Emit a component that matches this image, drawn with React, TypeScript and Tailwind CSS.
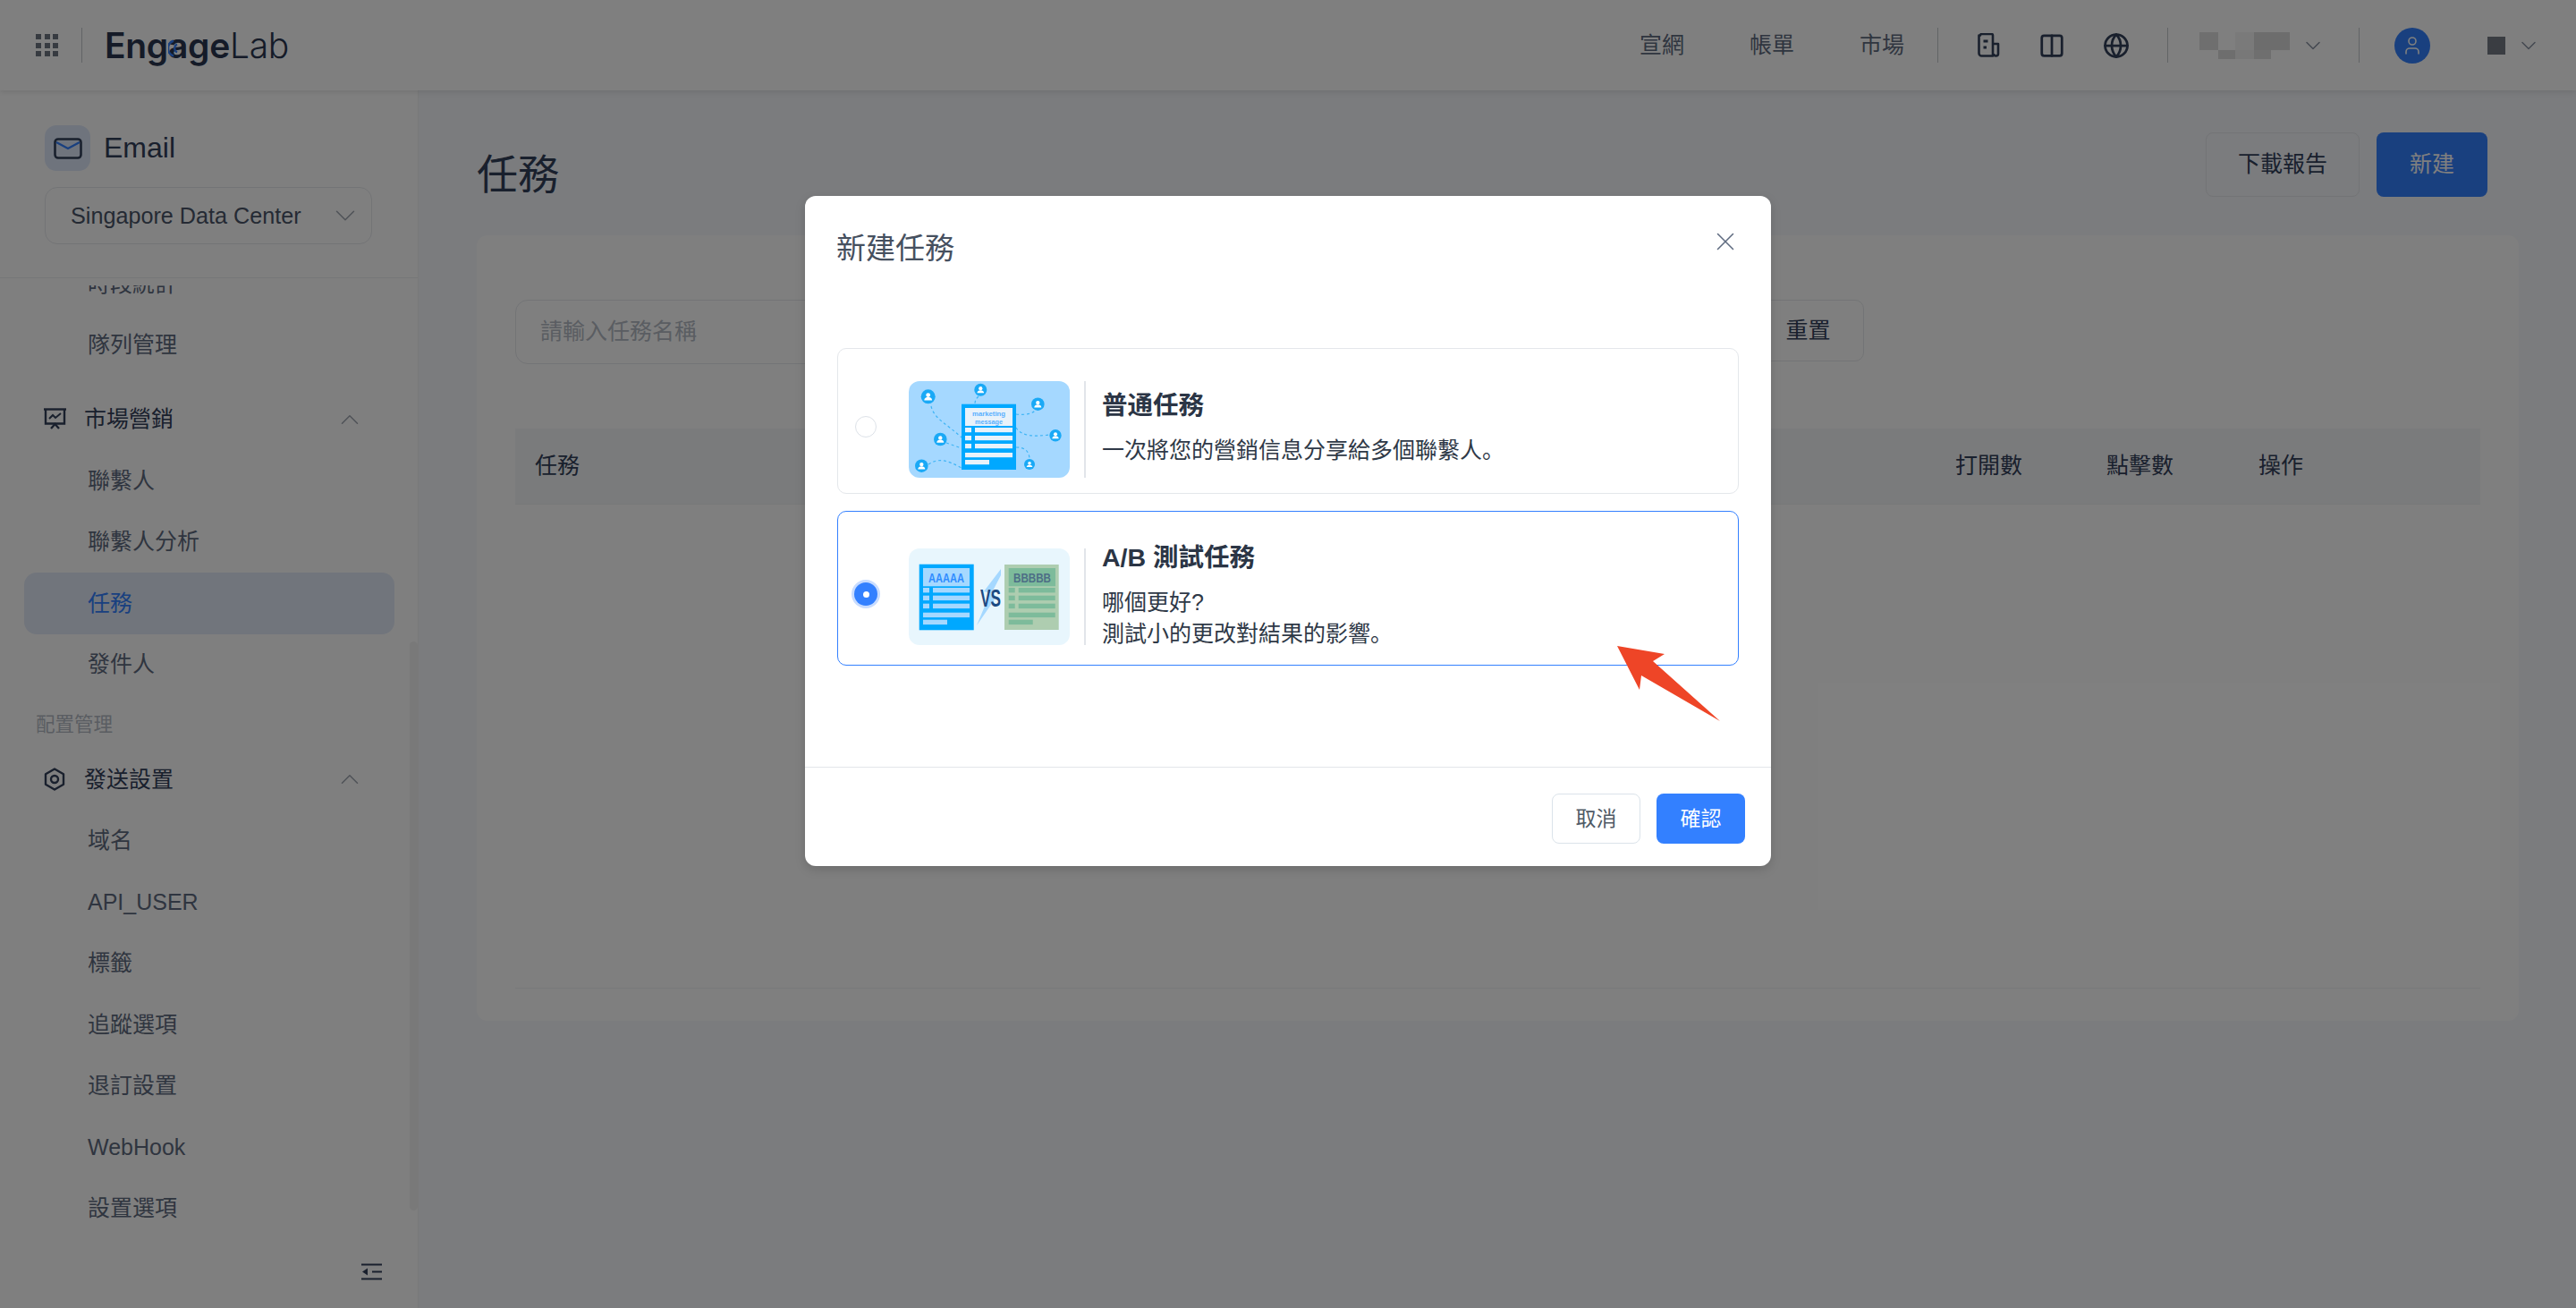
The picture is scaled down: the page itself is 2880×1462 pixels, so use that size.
import { ChevronDown, ChevronUp, Columns2, Globe, User, X } from 'lucide-react';

const subRow = 'flex h-[68.5px] items-center pl-[98px] text-[25px] text-[#5f6b80]';
const groupRow = 'flex h-[68.5px] items-center pl-[49px] pr-[59px] text-[25px] text-[#33405a]';

const GridIcon = () => (
  <div className="grid h-[25px] w-[25px] grid-cols-3 gap-[3.5px]">
    {Array.from({ length: 9 }).map((_, i) => (
      <span key={i} className="bg-[#6f7782]" />
    ))}
  </div>
);

const Logo = () => (
  <div className="flex items-baseline text-[39px] leading-none tracking-[-0.3px] text-[#2a3650] [font-family:Inter,sans-serif]">
    <span className="font-semibold">Eng</span>
    <span className="relative font-semibold">
      a
      <svg className="absolute left-0 top-[13px]" width="12" height="20" viewBox="0 0 12 20" fill="none">
        <path d="M6 1.5A9 9 0 0 0 6 18.5" stroke="#3380ff" strokeWidth="2.6" />
        <path d="M10 5.5A5 5 0 0 0 10 14.5" stroke="#3380ff" strokeWidth="2.2" />
      </svg>
    </span>
    <span className="font-semibold">ge</span>
    <span className="font-light">Lab</span>
  </div>
);

const DocIcon = () => (
  <svg width="25" height="27" viewBox="0 0 25 27" fill="none" stroke="#33405a" strokeWidth="2.6" strokeLinejoin="round">
    <path d="M3 2.5a1.5 1.5 0 0 1 1.5-1.5h11a1.5 1.5 0 0 1 1.5 1.5V25.5H4.5A3 3 0 0 1 1.5 22.5V2.5z" />
    <path d="M17 12h6v11a2.5 2.5 0 0 1-5 0" />
    <path d="M6.5 9h5M6.5 16h3.5" strokeWidth="3" />
  </svg>
);

const Mosaic = () => (
  <div className="w-[101px]">
    <div className="flex h-[20px]">
      <span className="w-[21px] bg-[#dfdfdf]" />
      <span className="w-[19px] bg-white" />
      <span className="w-[21px] bg-[#f4f4f4]" />
      <span className="w-[40px] bg-[#dadada]" />
    </div>
    <div className="ml-[21px] flex h-[10px]">
      <span className="w-[19px] bg-[#dcdcdc]" />
      <span className="w-[21px] bg-[#f0f0f0]" />
      <span className="w-[19px] bg-[#dedede]" />
    </div>
  </div>
);

const MarketIcon = () => (
  <svg width="25" height="25" viewBox="0 0 25 25" fill="none" stroke="#33405a" strokeWidth="2.4">
    <path d="M0 1.5h25" />
    <path d="M2 1.5V17.5H23V1.5" />
    <path d="M6 12l4-4 3 3 6-5" strokeWidth="2" />
    <path d="M8 23l4.5-5 4.5 5" />
  </svg>
);

const HexIcon = () => (
  <svg width="24" height="26" viewBox="0 0 24 26" fill="none" stroke="#33405a" strokeWidth="2.4">
    <path d="M12 1.5l10 5.7v11.6l-10 5.7-10-5.7V7.2z" strokeLinejoin="round" />
    <circle cx="12" cy="13" r="4" />
  </svg>
);

const CollapseIcon = () => (
  <svg width="23" height="19" viewBox="0 0 23 19" fill="none" stroke="#33405a" strokeWidth="2.2">
    <path d="M0 1.5h23M0 17.5h23M12 9.5h11" />
    <path d="M7 5.5v8l-6-4z" fill="#33405a" stroke="none" />
  </svg>
);

const Person = ({ cx, cy, r }: { cx: number; cy: number; r: number }) => (
  <g>
    <circle cx={cx} cy={cy} r={r} fill="#1aa9f6" />
    <circle cx={cx} cy={cy - r * 0.22} r={r * 0.3} fill="#fff" />
    <path
      d={`M${cx - r * 0.55} ${cy + r * 0.52}c0-${r * 0.6} ${r * 1.1}-${r * 0.6} ${r * 1.1} 0z`}
      fill="#fff"
    />
  </g>
);

const DocBars = ({ x, bar }: { x: number; bar: string }) => (
  <g fill={bar}>
    {[44, 52.7, 61.7].map((y) => (
      <g key={y}>
        <rect x={x} y={y} width="7" height="5.4" />
        <rect x={x + 11} y={y} width="41" height="5.4" />
      </g>
    ))}
    <rect x={x} y="71.7" width="52" height="5.4" />
    <rect x={x} y="79.7" width="27" height="5.4" />
  </g>
);

const NormalArt = () => (
  <svg width="180" height="108" viewBox="0 0 180 108" className="shrink-0">
    <rect width="180" height="108" rx="12" fill="#a5d8ff" />
    <g fill="none" stroke="#3fb4f5" strokeWidth="1.2" strokeDasharray="3 3">
      <path d="M25 28c3 14 18 20 34 35" />
      <path d="M78 17c-3 3-4 5-4 9" />
      <path d="M120 37c10 1 18 0 22-5" />
      <path d="M120 52c6 10 20 10 38 8" />
      <path d="M120 74c10 0 14 4 15 12" />
      <path d="M42 69l17 6" />
      <path d="M22 93c12-8 22-4 37 4" />
    </g>
    <rect x="59" y="25.7" width="61" height="73.3" fill="#00a8ff" />
    <rect x="63" y="30" width="53" height="20" fill="#e8f2fa" />
    <text x="89.5" y="39" textAnchor="middle" fontSize="7" fontWeight="700" fill="#58b0ff" textLength="37" lengthAdjust="spacingAndGlyphs" fontFamily="Liberation Sans, sans-serif">marketing</text>
    <text x="89.5" y="47.5" textAnchor="middle" fontSize="7" fontWeight="700" fill="#58b0ff" textLength="31" lengthAdjust="spacingAndGlyphs" fontFamily="Liberation Sans, sans-serif">message</text>
    <g fill="#e8f2fa">
      {[52, 61, 70].map((y) => (
        <g key={y}>
          <rect x="63" y={y} width="7" height="5.2" />
          <rect x="74" y={y} width="42" height="5.2" />
        </g>
      ))}
      <rect x="63" y="80" width="53" height="5.2" />
      <rect x="63" y="88" width="27" height="5.2" />
    </g>
    <Person cx={21.7} cy={17.3} r={8} />
    <Person cx={80.3} cy={9.7} r={7} />
    <Person cx={144.3} cy={25.7} r={7.3} />
    <Person cx={164} cy={60.7} r={6.7} />
    <Person cx={35.3} cy={65} r={7.3} />
    <Person cx={14.3} cy={94.7} r={7.3} />
    <Person cx={135} cy={93} r={6} />
  </svg>
);

const AbArt = () => (
  <svg width="180" height="108" viewBox="0 0 180 108" className="shrink-0">
    <rect width="180" height="108" rx="12" fill="#e8f6fd" />
    <rect x="11.7" y="17.7" width="61" height="73.6" fill="#00a8ff" />
    <rect x="16" y="22" width="52" height="20.3" fill="#a5d8ff" />
    <text x="42" y="37.5" textAnchor="middle" fontSize="14" fontWeight="700" fill="#2f8cff" textLength="40" lengthAdjust="spacingAndGlyphs" fontFamily="Liberation Sans, sans-serif">AAAAA</text>
    <DocBars x={16} bar="#a5d8ff" />
    <rect x="107" y="18" width="60.7" height="73" fill="#aecdb0" />
    <rect x="111.7" y="22" width="52.3" height="20.3" fill="#7dbb9b" />
    <text x="138" y="37.5" textAnchor="middle" fontSize="14" fontWeight="700" fill="#4d6f86" textLength="42" lengthAdjust="spacingAndGlyphs" fontFamily="Liberation Sans, sans-serif">BBBBB</text>
    <DocBars x={111.7} bar="#7dbb9b" />
    <path d="M103 23L84 48l7 2-15 36 22-32-6-3 11-21z" fill="#a5d8ff" />
    <text x="91.5" y="65" textAnchor="middle" fontSize="27" fontWeight="700" fill="#1d4a82" textLength="23" lengthAdjust="spacingAndGlyphs" fontFamily="Liberation Sans, sans-serif">VS</text>
  </svg>
);

const TaskOption = ({
  selected,
  art,
  title,
  lines,
  className,
}: {
  selected?: boolean;
  art: React.ReactNode;
  title: string;
  lines: string[];
  className: string;
}) => (
  <div className={`flex items-center rounded-[10px] border pl-[19px] pt-[19px] ${className}`}>
    <div className="mb-[6px] flex w-[24px] justify-center">
      {selected ? (
        <span className="flex h-[26px] w-[26px] shrink-0 items-center justify-center rounded-full bg-[#3380ff] shadow-[0_0_0_3px_#c8dcff]">
          <span className="h-[7px] w-[7px] rounded-full bg-white" />
        </span>
      ) : (
        <span className="h-[24px] w-[24px] shrink-0 rounded-full border border-[#dde2e8]" />
      )}
    </div>
    <div className="ml-[36px]">{art}</div>
    <span className="ml-[16px] h-[108px] w-[2px] bg-[#e2e5ea]" />
    <div className="mb-[6px] ml-[18px] pt-[1px]">
      <div className="text-[28.5px] font-bold leading-[38px] text-[#2b3545]">{title}</div>
      <div className="mt-[14px]">
        {lines.map((l) => (
          <div key={l} className="text-[25px] leading-[35px] text-[#2f3947]">
            {l}
          </div>
        ))}
      </div>
    </div>
  </div>
);

const App = () => {
  return (
    <div className="relative h-[1462px] w-[2880px] overflow-hidden bg-[#f6f8fc] [font-family:'Liberation_Sans','Noto_Sans_CJK_SC',sans-serif]">
      <header className="relative z-10 flex h-[101px] items-center bg-white pl-[40px] pr-[39px] shadow-[0_2px_6px_rgba(0,0,0,0.1)]">
        <GridIcon />
        <span className="ml-[26px] h-[39px] w-[1px] bg-[#c5c8cc]" />
        <div className="ml-[25px]">
          <Logo />
        </div>
        <div className="ml-auto flex items-center text-[25px] text-[#5f6b80]">
          <span>宣網</span>
          <span className="ml-[73px]">帳單</span>
          <span className="ml-[73px]">市場</span>
          <span className="ml-[37px] h-[39px] w-[1px] bg-[#c5c8cc]" />
          <span className="ml-[44px]">
            <DocIcon />
          </span>
          <Columns2 className="ml-[43px]" size={30} strokeWidth={2.2} color="#33405a" />
          <Globe className="ml-[42px]" size={30} strokeWidth={2.2} color="#33405a" />
          <span className="ml-[42px] h-[39px] w-[1px] bg-[#c5c8cc]" />
          <div className="ml-[35px]">
            <Mosaic />
          </div>
          <ChevronDown className="ml-[12px]" size={28} strokeWidth={1.3} color="#8a93a3" />
          <span className="ml-[37px] h-[39px] w-[1px] bg-[#c5c8cc]" />
          <span className="ml-[39px] flex h-[40px] w-[40px] items-center justify-center rounded-full bg-[#3380ff]">
            <User size={24} strokeWidth={1.6} color="#fff" />
          </span>
          <span className="ml-[64px] h-[20px] w-[20px] bg-[#747a84]" />
          <ChevronDown className="ml-[12px]" size={28} strokeWidth={1.3} color="#8a93a3" />
        </div>
      </header>

      <div className="flex h-[1361px]">
        <aside className="relative flex w-[468px] shrink-0 flex-col border-r border-[#f2f2f2] bg-white">
          <div className="h-[210px] shrink-0 border-b border-[#eceef0] pl-[50px] pt-[39px]">
            <div className="flex items-center">
              <span className="flex h-[51px] w-[51px] items-center justify-center rounded-[13px] bg-[#dfe9fb]">
                <svg width="32" height="24" viewBox="0 0 32 24" fill="none">
                  <rect x="1.5" y="1.5" width="29" height="21" rx="3.5" stroke="#33405a" strokeWidth="2.6" />
                  <path d="M3 5l13 7 13-7" stroke="#3380ff" strokeWidth="2.4" />
                </svg>
              </span>
              <span className="mb-[2px] ml-[15px] text-[32px] text-[#33405a]">Email</span>
            </div>
            <div className="mt-[18px] flex h-[64px] w-[366px] items-center justify-between rounded-[14px] border border-[#e6e8ec] pl-[28px] pr-[10px] text-[25.2px] text-[#4a5568]">
              <span className="pt-[2px]">Singapore Data Center</span>
              <ChevronDown size={38} strokeWidth={1} color="#a0a6b0" />
            </div>
          </div>

          <div className="mt-[8px] min-h-0 flex-1 overflow-hidden">
            <div className="-mt-[36px]">
              <div className={subRow}>時段統計</div>
              <div className={subRow}>隊列管理</div>

              <div className={`${groupRow} mt-[14.5px]`}>
                <MarketIcon />
                <span className="ml-[20px] flex-1">市場營銷</span>
                <ChevronUp size={34} strokeWidth={1.1} color="#a0a6b0" />
              </div>
              <div className={subRow}>聯繫人</div>
              <div className={subRow}>聯繫人分析</div>
              <div className="mx-[27px] flex h-[68.5px] w-[414px] items-center rounded-[14px] bg-[#e3ebf9] pl-[71px] text-[25px] text-[#3380ff]">
                任務
              </div>
              <div className={subRow}>發件人</div>
              <div className="flex h-[68.5px] items-center pb-[2px] pl-[40px] text-[21.5px] text-[#b4bac4]">配置管理</div>
              <div className={`${groupRow} -mt-[8.5px]`}>
                <HexIcon />
                <span className="ml-[21px] flex-1">發送設置</span>
                <ChevronUp size={34} strokeWidth={1.1} color="#a0a6b0" />
              </div>
              <div className={subRow}>域名</div>
              <div className={subRow}>API_USER</div>
              <div className={subRow}>標籤</div>
              <div className={subRow}>追蹤選項</div>
              <div className={subRow}>退訂設置</div>
              <div className={subRow}>WebHook</div>
              <div className={subRow}>設置選項</div>
            </div>
          </div>

          <div className="flex h-[72px] shrink-0 items-center justify-end pb-[10px] pr-[40px]">
            <CollapseIcon />
          </div>
          <span className="absolute right-0 top-[616px] h-[636px] w-[9px] rounded-full bg-[#f2f2f2]" />
        </aside>

        <main className="flex-1 pl-[65px] pr-[64px] pt-[47px]">
          <div className="flex h-[115px] items-start justify-between pr-[35px]">
            <h1 className="mt-[16px] text-[46px] font-normal leading-[62px] text-[#33405a]">任務</h1>
            <div className="flex gap-[19px] text-[25px]">
              <button className="h-[72px] w-[172px] rounded-[8px] border border-[#e6e8ec] text-[#33405a]">下載報告</button>
              <button className="h-[72px] w-[124px] rounded-[8px] bg-[#3380ff] text-white">新建</button>
            </div>
          </div>

          <section className="h-[878px] rounded-[12px] bg-white px-[43px] pt-[72px]">
            <div className="flex items-start">
              <div className="flex h-[72px] w-[500px] items-center rounded-[14px] border border-[#e6e8ec] pl-[27px] text-[25px] text-[#b4bac4]">
                請輸入任務名稱
              </div>
              <button className="ml-[883px] h-[69px] w-[125px] rounded-[10px] border border-[#e6e8ec] text-[25px] text-[#33405a]">重置</button>
            </div>
            <div className="mt-[72px] grid h-[85px] w-[2197px] grid-cols-[1588px_169px_170px_1fr] items-center border-b border-[#eef0f2] bg-[#f5f6f8] pl-[22px] text-[25px] text-[#33405a]">
              <span>任務</span>
              <span>打開數</span>
              <span>點擊數</span>
              <span>操作</span>
            </div>
            <div className="h-[541px] w-[2197px] border-b border-[#f0f2f4]" />
          </section>
        </main>
      </div>

      {/* dialog layer */}
      <div className="absolute inset-0 z-20 flex items-start justify-center bg-black/50 pt-[219px]">
        <div className="relative h-[749px] w-[1080px] rounded-[12px] bg-white shadow-[0_4px_12px_rgba(0,0,0,0.15)]">
          <div className="flex h-[170px] items-start justify-between pl-[35px] pr-[34px] pt-[33px]">
            <span className="pt-[3px] text-[33px] leading-[46px] text-[#46505f]">新建任務</span>
            <X className="mt-[1px]" size={34} strokeWidth={1.1} color="#5f6b80" />
          </div>

          <div className="mx-[36px] flex flex-col gap-[19px]">
            <TaskOption
              className="h-[163px] border-[#e4e7eb]"
              art={<NormalArt />}
              title="普通任務"
              lines={['一次將您的營銷信息分享給多個聯繫人。']}
            />
            <TaskOption
              selected
              className="h-[173px] border-[#3380ff]"
              art={<AbArt />}
              title="A/B 測試任務"
              lines={['哪個更好?', '測試小的更改對結果的影響。']}
            />
          </div>

          <div className="mt-[113px] flex h-[111px] items-start justify-end gap-[18px] border-t border-[#e2e5ea] pr-[29px] pt-[29px] text-[23px]">
            <button className="h-[56px] w-[99px] rounded-[8px] border border-[#dbe3ea] text-[#4f5a66]">取消</button>
            <button className="h-[56px] w-[99px] rounded-[8px] bg-[#3380ff] text-white">確認</button>
          </div>

          <svg className="absolute left-[900px] top-[495px]" width="125" height="95" viewBox="0 0 125 95">
            <path d="M8 8L61 17 48 25 123 92 35 41 33 57z" fill="#ee4527" />
          </svg>
        </div>
      </div>
    </div>
  );
};

export default App;
